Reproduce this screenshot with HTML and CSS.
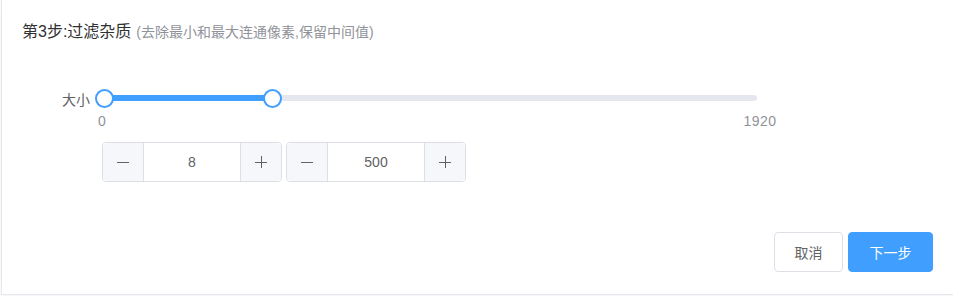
FILE: index.html
```html
<!DOCTYPE html>
<html lang="zh-CN">
<head>
  <meta charset="UTF-8">
  <meta name="viewport" content="width=device-width, initial-scale=1.0">
  <title>过滤杂质</title>

  <link rel="stylesheet" href="styles.css">
</head>
<body>
  <div class="step-card">
    <div class="step-title">
      第3步:过滤杂质<span class="step-tip">(去除最小和最大连通像素,保留中间值)</span>
    </div>

    <div class="form-item">
      <label class="form-label">大小</label>
      <div class="slider">
        <div class="slider-runway">
          <div class="slider-bar" style="left: 0.4167%; width: 25.625%;"></div>
          <div class="slider-button" style="left: 0.4167%;"></div>
          <div class="slider-button" style="left: 26.0417%;"></div>
        </div>
        <span class="slider-mark" style="left: 0%;">0</span>
        <span class="slider-mark mark-end" style="left: 100%;">1920</span>
      </div>
    </div>

    <div class="number-row">
      <div class="input-number">
        <span class="num-btn num-minus">
          <svg width="12" height="12" viewBox="0 0 12 12"><path d="M0 6.5h12" stroke="#606266" stroke-width="1"/></svg>
        </span>
        <input class="num-input" type="text" value="8">
        <span class="num-btn num-plus">
          <svg width="12" height="12" viewBox="0 0 12 12"><path d="M0 6.5h12M6.5 0v12" stroke="#606266" stroke-width="1"/></svg>
        </span>
      </div>
      <div class="input-number">
        <span class="num-btn num-minus">
          <svg width="12" height="12" viewBox="0 0 12 12"><path d="M0 6.5h12" stroke="#606266" stroke-width="1"/></svg>
        </span>
        <input class="num-input" type="text" value="500">
        <span class="num-btn num-plus">
          <svg width="12" height="12" viewBox="0 0 12 12"><path d="M0 6.5h12M6.5 0v12" stroke="#606266" stroke-width="1"/></svg>
        </span>
      </div>
    </div>

    <div class="step-footer">
      <button class="btn btn-cancel">取消</button>
      <button class="btn btn-primary">下一步</button>
    </div>
  </div>
</body>
</html>
```

FILE: styles.css
```css
body, html {
  margin: 0;
  height: 100%;
  overflow: hidden;
  background: #fff;
  font-family: "Helvetica Neue", "Liberation Sans", "Noto Sans CJK SC", sans-serif;
}
.step-card {
  box-sizing: border-box;
  width: 953px;
  height: 296px;
  margin: -1px 0 0 1px;
  padding: 21px 20px 0 20px;
  border: 1px solid #e4e7ed;
  box-shadow: 0 2px 12px 0 rgba(0, 0, 0, 0.06);
}
.step-title {
  font-size: 16px;
  line-height: 22px;
  color: #303133;
}
.step-tip {
  margin-left: 5px;
  font-size: 14px;
  color: #909399;
}

.form-item {
  display: flex;
  align-items: center;
  height: 38px;
  margin-top: 36px;
  margin-left: -20px;
}
.form-label {
  box-sizing: border-box;
  width: 100px;
  padding-right: 12px;
  padding-top: 3px;
  text-align: right;
  font-size: 14px;
  line-height: 38px;
  color: #606266;
}
.slider {
  position: relative;
  width: 655px;
  height: 38px;
  display: flex;
  align-items: center;
}
.slider-runway {
  position: relative;
  width: 100%;
  height: 6px;
  border-radius: 3px;
  background: #e4e7ed;
}
.slider-bar {
  position: absolute;
  top: 0;
  height: 6px;
  border-radius: 3px;
  background: #409eff;
}
.slider-button {
  position: absolute;
  top: 50%;
  box-sizing: border-box;
  width: 19px;
  height: 19px;
  margin: -9px 0 0 -9.5px;
  border: 2px solid #409eff;
  border-radius: 50%;
  background: #fff;
}
.slider-mark {
  position: absolute;
  top: 32px;
  transform: translateX(-50%);
  font-size: 14px;
  line-height: 20px;
  color: #909399;
}
.mark-end {
  margin-left: 3px;
  letter-spacing: 0.5px;
}

.number-row {
  display: flex;
  gap: 4px;
  margin-top: 25px;
  padding-left: 80px;
}
.input-number {
  box-sizing: border-box;
  display: flex;
  width: 180px;
  height: 40px;
  border: 1px solid #dcdfe6;
  border-radius: 4px;
  overflow: hidden;
}
.num-btn {
  display: flex;
  align-items: center;
  justify-content: center;
  width: 40px;
  background: #f5f7fa;
}
.num-minus {
  border-right: 1px solid #dcdfe6;
}
.num-plus {
  border-left: 1px solid #dcdfe6;
}
.num-input {
  flex: 1;
  min-width: 0;
  border: none;
  padding: 0;
  text-align: center;
  font-family: inherit;
  font-size: 14px;
  color: #606266;
  outline: none;
}

.step-footer {
  display: flex;
  justify-content: flex-end;
  gap: 5px;
  margin-top: 50px;
}
.btn {
  box-sizing: border-box;
  height: 40px;
  padding: 0;
  border: 1px solid #dcdfe6;
  border-radius: 4px;
  background: #fff;
  font-family: inherit;
  font-size: 14px;
  color: #606266;
}
.btn-cancel {
  width: 69px;
}
.btn-primary {
  width: 85px;
  border-color: #409eff;
  background: #409eff;
  color: #fff;
}
```
